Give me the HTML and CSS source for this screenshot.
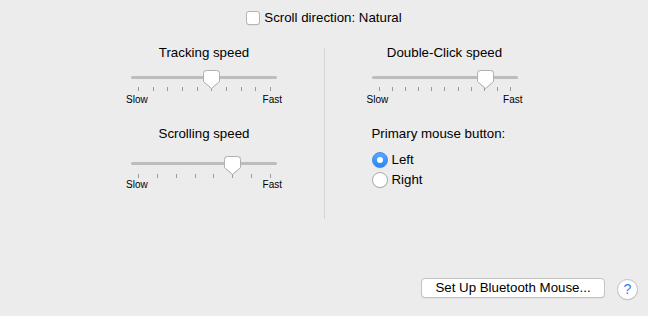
FILE: index.html
```html
<!DOCTYPE html>
<html>
<head>
<meta charset="utf-8">
<link rel="stylesheet" href="styles.css">
</head>
<body>
<div class="window">
  <div class="top">
    <label class="check"><span class="box"></span><span>Scroll direction: Natural</span></label>
  </div>
  <div class="panels">
    <div class="col">
      <div class="group">
        <div class="title">Tracking speed</div>
        <div class="slider">
          <div class="track"></div>
          <svg class="knob" style="left:77px" width="17" height="20" viewBox="0 0 17 20"><path d="M3.5,0.5 H13.5 A3,3 0 0 1 16.5,3.5 V11.5 L8.5,18.5 L0.5,11.5 V3.5 A3,3 0 0 1 3.5,0.5 Z"/></svg>
          <div class="ticks"><i></i><i></i><i></i><i></i><i></i><i></i><i></i><i></i><i></i><i></i></div>
        </div>
        <div class="ends"><span>Slow</span><span>Fast</span></div>
      </div>
      <div class="group second scroll">
        <div class="title">Scrolling speed</div>
        <div class="slider">
          <div class="track"></div>
          <svg class="knob" style="left:98px" width="17" height="20" viewBox="0 0 17 20"><path d="M3.5,0.5 H13.5 A3,3 0 0 1 16.5,3.5 V11.5 L8.5,18.5 L0.5,11.5 V3.5 A3,3 0 0 1 3.5,0.5 Z"/></svg>
          <div class="ticks"><i></i><i></i><i></i><i></i><i></i><i></i><i></i><i></i></div>
        </div>
        <div class="ends"><span>Slow</span><span>Fast</span></div>
      </div>
    </div>
    <div class="sep"></div>
    <div class="col right">
      <div class="group">
        <div class="title">Double-Click speed</div>
        <div class="slider">
          <div class="track"></div>
          <svg class="knob" style="left:110px" width="17" height="20" viewBox="0 0 17 20"><path d="M3.5,0.5 H13.5 A3,3 0 0 1 16.5,3.5 V11.5 L8.5,18.5 L0.5,11.5 V3.5 A3,3 0 0 1 3.5,0.5 Z"/></svg>
          <div class="ticks"><i></i><i></i><i></i><i></i><i></i><i></i><i></i><i></i><i></i><i></i><i></i></div>
        </div>
        <div class="ends"><span>Slow</span><span>Fast</span></div>
      </div>
      <div class="group second primary">
        <div class="label">Primary mouse button:</div>
        <div class="radio"><span class="dot on"></span><span>Left</span></div>
        <div class="radio"><span class="dot"></span><span>Right</span></div>
      </div>
    </div>
  </div>
  <div class="footer">
    <button class="btn">Set Up Bluetooth Mouse...</button>
    <span class="help">?</span>
  </div>
</div>
</body>
</html>
```
FILE: styles.css
```css
* { box-sizing: border-box; }
html, body { margin: 0; padding: 0; }
body {
  background: #ececec;
  font-family: "Liberation Sans", Arial, sans-serif;
  font-size: 13.3px;
  color: #000;
}
.window {
  width: 648px;
  height: 316px;
  display: flex;
  flex-direction: column;
}
.top {
  display: flex;
  justify-content: center;
  padding-top: 10px;
  height: 45px;
}
.check {
  display: flex;
  align-items: center;
  gap: 4px;
  height: 16px;
  line-height: 16px;
}
.box {
  width: 14px;
  height: 14px;
  border: 1px solid #b4b4b4;
  border-radius: 3px;
  background: #fff;
  box-shadow: 0 0.5px 0.5px rgba(0,0,0,0.08);
}
.panels {
  display: flex;
  justify-content: center;
}
.col {
  width: 240px;
  display: flex;
  flex-direction: column;
  align-items: center;
}
.col.right { width: 239px; }
.sep {
  width: 1px;
  height: 171px;
  margin-top: 3px;
  background: #d4d4d4;
}
.group {
  width: 156px;
  display: flex;
  flex-direction: column;
}
.group.second { margin-top: 20px; }
.title {
  text-align: center;
  line-height: 16px;
  height: 16px;
}
.slider {
  position: relative;
  margin-top: 14.5px;
}
.scroll .slider { margin-top: 20px; }
.track {
  margin: 0 5px;
  height: 3px;
  border-radius: 2px;
  background: #bdbdbd;
}
.knob {
  position: absolute;
  top: -6px;
  overflow: visible;
  filter: drop-shadow(0 0.5px 0.6px rgba(0,0,0,0.18));
}
.knob path {
  fill: #fff;
  stroke: #b0b0b0;
  stroke-width: 1;
}
.ticks {
  display: flex;
  justify-content: space-between;
  padding: 0 11px 0 12px;
  margin-top: 8px;
  height: 4px;
}
.scroll .ticks { margin-top: 9px; }
.ticks i {
  display: block;
  width: 1px;
  height: 4px;
  background: #9a9a9a;
}
.ends {
  display: flex;
  justify-content: space-between;
  font-size: 10px;
  line-height: 12px;
  margin-top: 3.5px;
  height: 12px;
}
.scroll .ends { margin-top: 1px; }
.label {
  padding-left: 5px;
  line-height: 16px;
  height: 16px;
}
.radio {
  display: flex;
  align-items: center;
  gap: 4px;
  padding-left: 5px;
  height: 20px;
  line-height: 20px;
}
.primary .label + .radio { margin-top: 7.5px; }
.dot {
  width: 16px;
  height: 16px;
  border-radius: 50%;
  background: #fff;
  border: 1px solid #ababab;
  box-shadow: 0 0.5px 0.5px rgba(0,0,0,0.08);
  position: relative;
}
.dot.on {
  background: linear-gradient(#5aa8fb, #2a85f5);
  border-color: #3a8bed;
}
.dot.on::after {
  content: "";
  position: absolute;
  left: 4px;
  top: 4px;
  width: 6px;
  height: 6px;
  border-radius: 50%;
  background: #fff;
}
.footer {
  margin-top: auto;
  display: flex;
  justify-content: flex-end;
  align-items: center;
  gap: 12px;
  padding: 0 10px 16px 0;
}
.btn {
  width: 184px;
  height: 20px;
  margin-bottom: 2px;
  font-family: "Liberation Sans", Arial, sans-serif;
  font-size: 13.3px;
  color: #000;
  background: #fff;
  border: 1px solid #c3c3c3;
  border-radius: 4px;
  box-shadow: 0 0.5px 0.5px rgba(0,0,0,0.1);
  padding: 0;
  line-height: 18px;
}
.help {
  width: 21px;
  height: 21px;
  border-radius: 50%;
  background: #fff;
  border: 1px solid #c3c3c3;
  box-shadow: 0 0.5px 0.5px rgba(0,0,0,0.1);
  color: #2b7ff2;
  font-size: 14px;
  line-height: 19px;
  text-align: center;
}
```
